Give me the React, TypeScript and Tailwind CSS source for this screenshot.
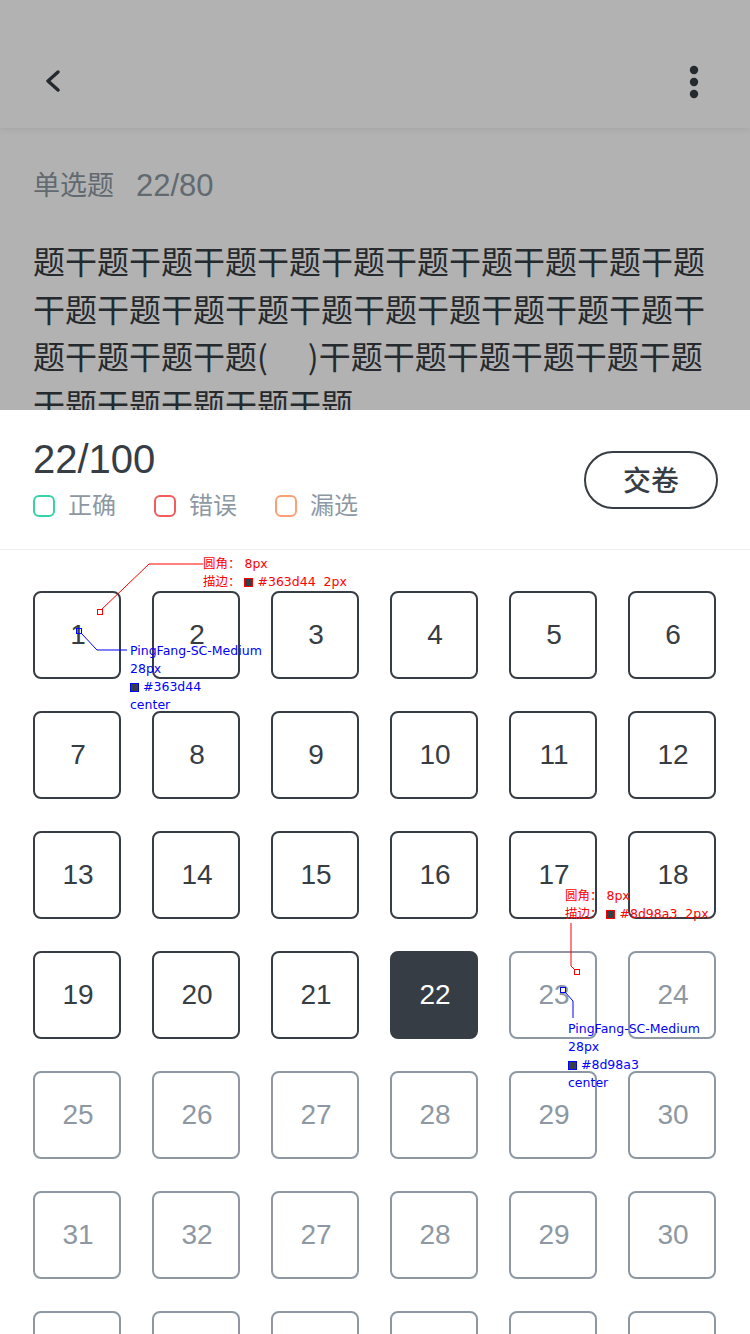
import React from 'react';

const cells: string[] = [
  ...Array.from({ length: 30 }, (_, i) => String(i + 1)),
  '31', '32', '27', '28', '29', '30',
  '', '', '', '', '', '',
];

const Cell: React.FC<{ label: string; index: number }> = ({ label, index }) => {
  let tone = 'border-[#8d98a3] text-[#8d98a3]';
  if (index < 21) tone = 'border-[#363d44] text-[#363d44]';
  if (index === 21) tone = 'border-[#363d44] bg-[#363d44] text-white';
  return (
    <div className={`w-[88px] h-[88px] rounded-[8px] border-2 flex items-center justify-center pl-[2px] text-[28px] ${tone}`}>
      {label}
    </div>
  );
};

const Swatch: React.FC<{ color: string }> = ({ color }) => (
  <span className={`inline-block w-[9px] h-[9px] border ${color} bg-[#363d44] mr-[4px] align-[-1px]`} />
);

const App: React.FC = () => {
  return (
    <div className="relative w-[750px] h-[1334px] overflow-hidden bg-white font-['Liberation_Sans','Noto_Sans_CJK_SC',sans-serif]">
      {/* question page behind the mask */}
      <div className="relative h-[410px] overflow-hidden">
        <header className="h-[128px] pt-[36px] flex items-center justify-between px-[40px] shadow-[0_2px_6px_rgba(0,0,0,0.07)]">
          <svg width="20" height="24" viewBox="0 0 20 24" className="ml-[3px]">
            <path d="M15 2 L5 11 L15 20" fill="none" stroke="#363d44" strokeWidth="3.4" strokeLinecap="round" strokeLinejoin="round" />
          </svg>
          <svg width="12" height="36" viewBox="0 0 12 36" className="mr-[10px]">
            <circle cx="6" cy="6" r="4.2" fill="#363d44" />
            <circle cx="6" cy="18" r="4.2" fill="#363d44" />
            <circle cx="6" cy="30" r="4.2" fill="#363d44" />
          </svg>
        </header>

        <div className="px-[33px] pt-[40px]">
          <div className="flex items-center gap-[22px] h-[36px] text-[27px] text-[#8d98a3]">
            <span>单选题</span>
            <span className="text-[31px]">22/80</span>
          </div>
          <div className="mt-[33px] text-[32px] leading-[47.5px] text-[#363d44] font-['Noto_Sans_CJK_SC',sans-serif] whitespace-nowrap">
            <div>题干题干题干题干题干题干题干题干题干题干题</div>
            <div>干题干题干题干题干题干题干题干题干题干题干</div>
            <div>
              题干题干题干题(<span className="inline-block w-[40px]" />)干题干题干题干题干题干题
            </div>
            <div>干题干题干题干题干题</div>
          </div>
        </div>

        <div className="absolute inset-0 bg-black/30" />
      </div>

      {/* answer sheet */}
      <div className="bg-white">
        <div className="h-[140px] flex items-center justify-between pl-[33px] pr-[32px] border-b border-[#eeeeee]">
          <div className="self-start pt-[29px]">
            <div className="text-[40px] leading-[40px] text-[#363d44]">22/100</div>
            <div className="mt-[10px] flex items-center h-[34px] text-[24px] text-[#8d98a3]">
              <span className="w-[22px] h-[22px] rounded-[6px] border-2 border-[#35d3a7]" />
              <span className="ml-[13px]">正确</span>
              <span className="ml-[38px] w-[22px] h-[22px] rounded-[6px] border-2 border-[#f45b5b]" />
              <span className="ml-[13px]">错误</span>
              <span className="ml-[38px] w-[22px] h-[22px] rounded-[6px] border-2 border-[#ff9f75]" />
              <span className="ml-[13px]">漏选</span>
            </div>
          </div>
          <button className="w-[134px] h-[58px] pt-[4px] rounded-full border-2 border-[#363d44] text-[28px] font-medium text-[#363d44] flex items-center justify-center">
            交卷
          </button>
        </div>

        <div className="grid grid-cols-[repeat(6,88px)] gap-x-[31px] gap-y-[32px] px-[33px] pt-[41px]">
          {cells.map((c, i) => (
            <Cell key={i} label={c} index={i} />
          ))}
        </div>
      </div>

      {/* design annotations */}
      <svg className="absolute top-0 left-0 pointer-events-none" width="750" height="1334">
        <polyline points="203,564 149,564 101,610" fill="none" stroke="#ff0000" strokeWidth="1" />
        <rect x="97.5" y="609.5" width="5" height="5" fill="#ffffff" stroke="#ff0000" strokeWidth="1" />
        <polyline points="81,633 97,650 127,650" fill="none" stroke="#0000ff" strokeWidth="1" />
        <rect x="76.5" y="628.5" width="5" height="5" fill="none" stroke="#0000ff" strokeWidth="1" />
        <polyline points="571,923 571,966 575,970" fill="none" stroke="#ff0000" strokeWidth="1" />
        <rect x="574.5" y="969.5" width="5" height="5" fill="#ffffff" stroke="#ff0000" strokeWidth="1" />
        <polyline points="565,992 573,1001 573,1018" fill="none" stroke="#0000ff" strokeWidth="1" />
        <rect x="560.5" y="987.5" width="5" height="5" fill="none" stroke="#0000ff" strokeWidth="1" />
      </svg>

      <div className="absolute left-[203px] top-[555px] text-[12.5px] leading-[18px] text-[#ff0000] whitespace-pre font-['DejaVu_Sans','Noto_Sans_CJK_SC',sans-serif]">
        <div>圆角： 8px</div>
        <div>描边： <Swatch color="border-[#ff0000]" />#363d44  2px</div>
      </div>
      <div className="absolute left-[130px] top-[642px] text-[12.5px] leading-[18px] text-[#0000ff] whitespace-pre font-['DejaVu_Sans',sans-serif]">
        <div>PingFang-SC-Medium</div>
        <div>28px</div>
        <div><Swatch color="border-[#0000ff]" />#363d44</div>
        <div>center</div>
      </div>

      <div className="absolute left-[565px] top-[887px] text-[12.5px] leading-[18px] text-[#ff0000] whitespace-pre font-['DejaVu_Sans','Noto_Sans_CJK_SC',sans-serif]">
        <div>圆角： 8px</div>
        <div>描边： <Swatch color="border-[#ff0000]" />#8d98a3  2px</div>
      </div>
      <div className="absolute left-[568px] top-[1020px] text-[12.5px] leading-[18px] text-[#0000ff] whitespace-pre font-['DejaVu_Sans',sans-serif]">
        <div>PingFang-SC-Medium</div>
        <div>28px</div>
        <div><Swatch color="border-[#0000ff]" />#8d98a3</div>
        <div>center</div>
      </div>
    </div>
  );
};

export default App;
